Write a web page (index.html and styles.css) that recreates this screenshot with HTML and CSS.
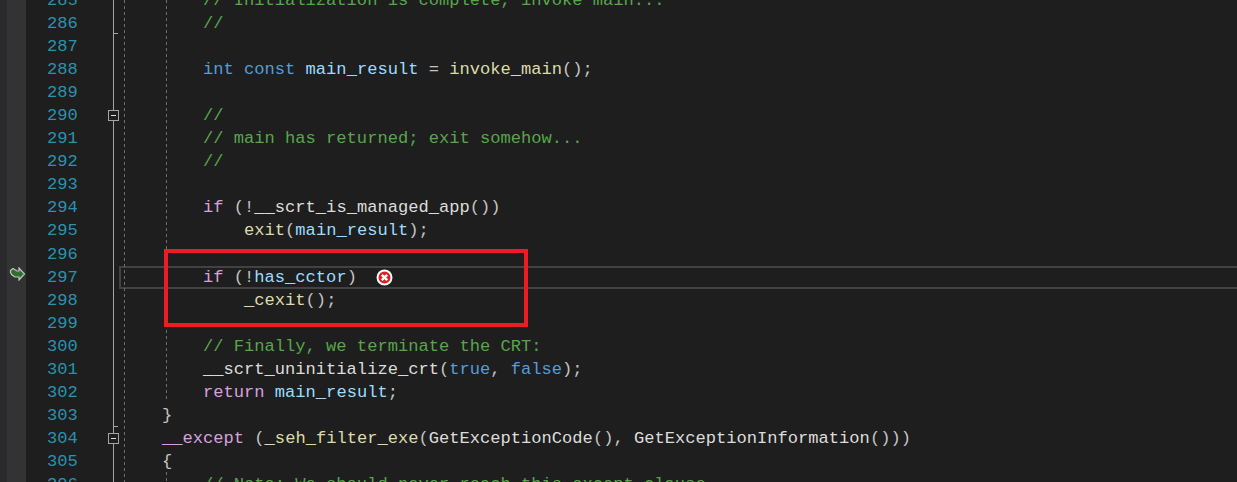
FILE: index.html
```html
<!DOCTYPE html>
<html lang="en">
<head>
<meta charset="utf-8">
<title>exe_common.inl</title>
<link rel="stylesheet" href="styles.css">
</head>
<body>
<div class="editor">
  <div class="strip"></div>
  <div class="glyphs">
    <svg class="arrow" width="17" height="14" viewBox="0 0 17 14"><path d="M1.5 3.5 L4 1.5 L8 4 L10 4 L10 1 L15.5 7 L10 13 L10 10 L6 10 L3 8 L1.5 5.5 Z" fill="#2f6f2f" stroke="#c4c4c4" stroke-width="1.2"/></svg>
  </div>
  <div class="pane">
    <div class="lines">
      <div class="row"><span class="num">285</span><span class="code"><i class="c">// Initialization is complete, invoke main...</i></span></div>
      <div class="row"><span class="num">286</span><span class="code"><i class="c">//</i></span></div>
      <div class="row"><span class="num">287</span><span class="code"></span></div>
      <div class="row"><span class="num">288</span><span class="code"><i class="k">int const</i> <i class="v">main_result</i> = <i class="f">invoke_main</i>();</span></div>
      <div class="row"><span class="num">289</span><span class="code"></span></div>
      <div class="row"><span class="num">290</span><span class="code"><i class="c">//</i></span></div>
      <div class="row"><span class="num">291</span><span class="code"><i class="c">// main has returned; exit somehow...</i></span></div>
      <div class="row"><span class="num">292</span><span class="code"><i class="c">//</i></span></div>
      <div class="row"><span class="num">293</span><span class="code"></span></div>
      <div class="row"><span class="num">294</span><span class="code"><i class="p">if</i> (!<i class="w">__scrt_is_managed_app</i>())</span></div>
      <div class="row"><span class="num">295</span><span class="code">    <i class="f">exit</i>(<i class="v">main_result</i>);</span></div>
      <div class="row"><span class="num">296</span><span class="code"></span></div>
      <div class="row current"><span class="num">297</span><span class="code"><i class="p">if</i> (!<i class="v">has_cctor</i>)</span></div>
      <div class="row"><span class="num">298</span><span class="code">    <i class="f">_cexit</i>();</span></div>
      <div class="row"><span class="num">299</span><span class="code"></span></div>
      <div class="row"><span class="num">300</span><span class="code"><i class="c">// Finally, we terminate the CRT:</i></span></div>
      <div class="row"><span class="num">301</span><span class="code"><i class="w">__scrt_uninitialize_crt</i>(<i class="k">true</i>, <i class="k">false</i>);</span></div>
      <div class="row"><span class="num">302</span><span class="code"><i class="p">return</i> <i class="v">main_result</i>;</span></div>
      <div class="row"><span class="num">303</span><span class="code out1">}</span></div>
      <div class="row"><span class="num">304</span><span class="code out1"><i class="p">__except</i> (<i class="f">_seh_filter_exe</i>(<i class="w">GetExceptionCode</i>(), <i class="w">GetExceptionInformation</i>()))</span></div>
      <div class="row"><span class="num">305</span><span class="code out1">{</span></div>
      <div class="row"><span class="num">306</span><span class="code"><i class="c">// Note: We should never reach this except clause.</i></span></div>
    </div>
    <div class="outline"></div>
    <div class="tick t1"></div>
    <div class="tick t2"></div>
    <div class="fold f1"></div>
    <div class="fold f2"></div>
    <div class="guide g1"></div>
    <div class="guide g2"></div>
    <div class="guide g3"></div>
    <svg class="err" width="17" height="17" viewBox="0 0 17 17"><circle cx="8.5" cy="8.5" r="7" fill="#e51c23" stroke="#fff" stroke-width="2"/><path d="M5.8 5.8 L11.2 11.2 M11.2 5.8 L5.8 11.2" stroke="#fff" stroke-width="2.4"/></svg>
    <div class="mark"></div>
  </div>
</div>
</body>
</html>
```
FILE: styles.css
```css
html, body { margin: 0; padding: 0; background: #1e1e1e; }
.editor { display: flex; width: 1237px; height: 482px; overflow: hidden; }
.strip { width: 7px; background: #2a2a2c; }
.glyphs { position: relative; width: 19px; background: #333333; }
.arrow { position: absolute; left: 2px; top: 267px; }
.pane { position: relative; flex: 1; background: #1e1e1e; }
.lines { margin-top: -11px; font: 17.1px/23.05px "Liberation Mono", monospace; color: #c4c4c4; }
.row { display: flex; height: 23.05px; white-space: pre; }
.row i { font-style: normal; }
.num { width: 40px; margin-left: 21px; color: #2b91af; }
.code { margin-left: 116px; }
.code.out1 { margin-left: 75px; }
.c { color: #57a64a; }
.k { color: #569cd6; }
.v { color: #9cdcfe; }
.f { color: #dcdcaa; }
.w { color: #dcdcdc; }
.p { color: #d8a0df; }
.current { position: relative; }
.current::after { content: ""; position: absolute; left: 93px; right: 0; top: 0; height: 23px; box-sizing: border-box; border: 2px solid #424242; border-right: 0; }
.outline { position: absolute; left: 87px; top: 0; bottom: 0; width: 1px; background: #a5a5a5; }
.tick { position: absolute; left: 87px; width: 5px; height: 1px; background: #a5a5a5; }
.t1 { top: 33px; }
.t2 { top: 426px; }
.fold { position: absolute; left: 82px; width: 9px; height: 9px; border: 1px solid #a5a5a5; background: #1e1e1e; }
.fold::after { content: ""; position: absolute; left: 2px; top: 4px; width: 5px; height: 1px; background: #e0e0e0; }
.f1 { top: 110px; }
.f2 { top: 433px; }
.guide { position: absolute; width: 1px; background: repeating-linear-gradient(to bottom, #6e6e6e 0 3px, transparent 3px 6px); }
.g1 { left: 98px; top: 0; bottom: 0; }
.g2 { left: 140px; top: 0; height: 402px; }
.g3 { left: 140px; top: 472px; bottom: 0; }
.err { position: absolute; left: 350px; top: 269px; }
.mark { position: absolute; left: 138px; top: 249px; width: 364px; height: 78px; box-sizing: border-box; border: 4px solid #ed1c24; }
```
